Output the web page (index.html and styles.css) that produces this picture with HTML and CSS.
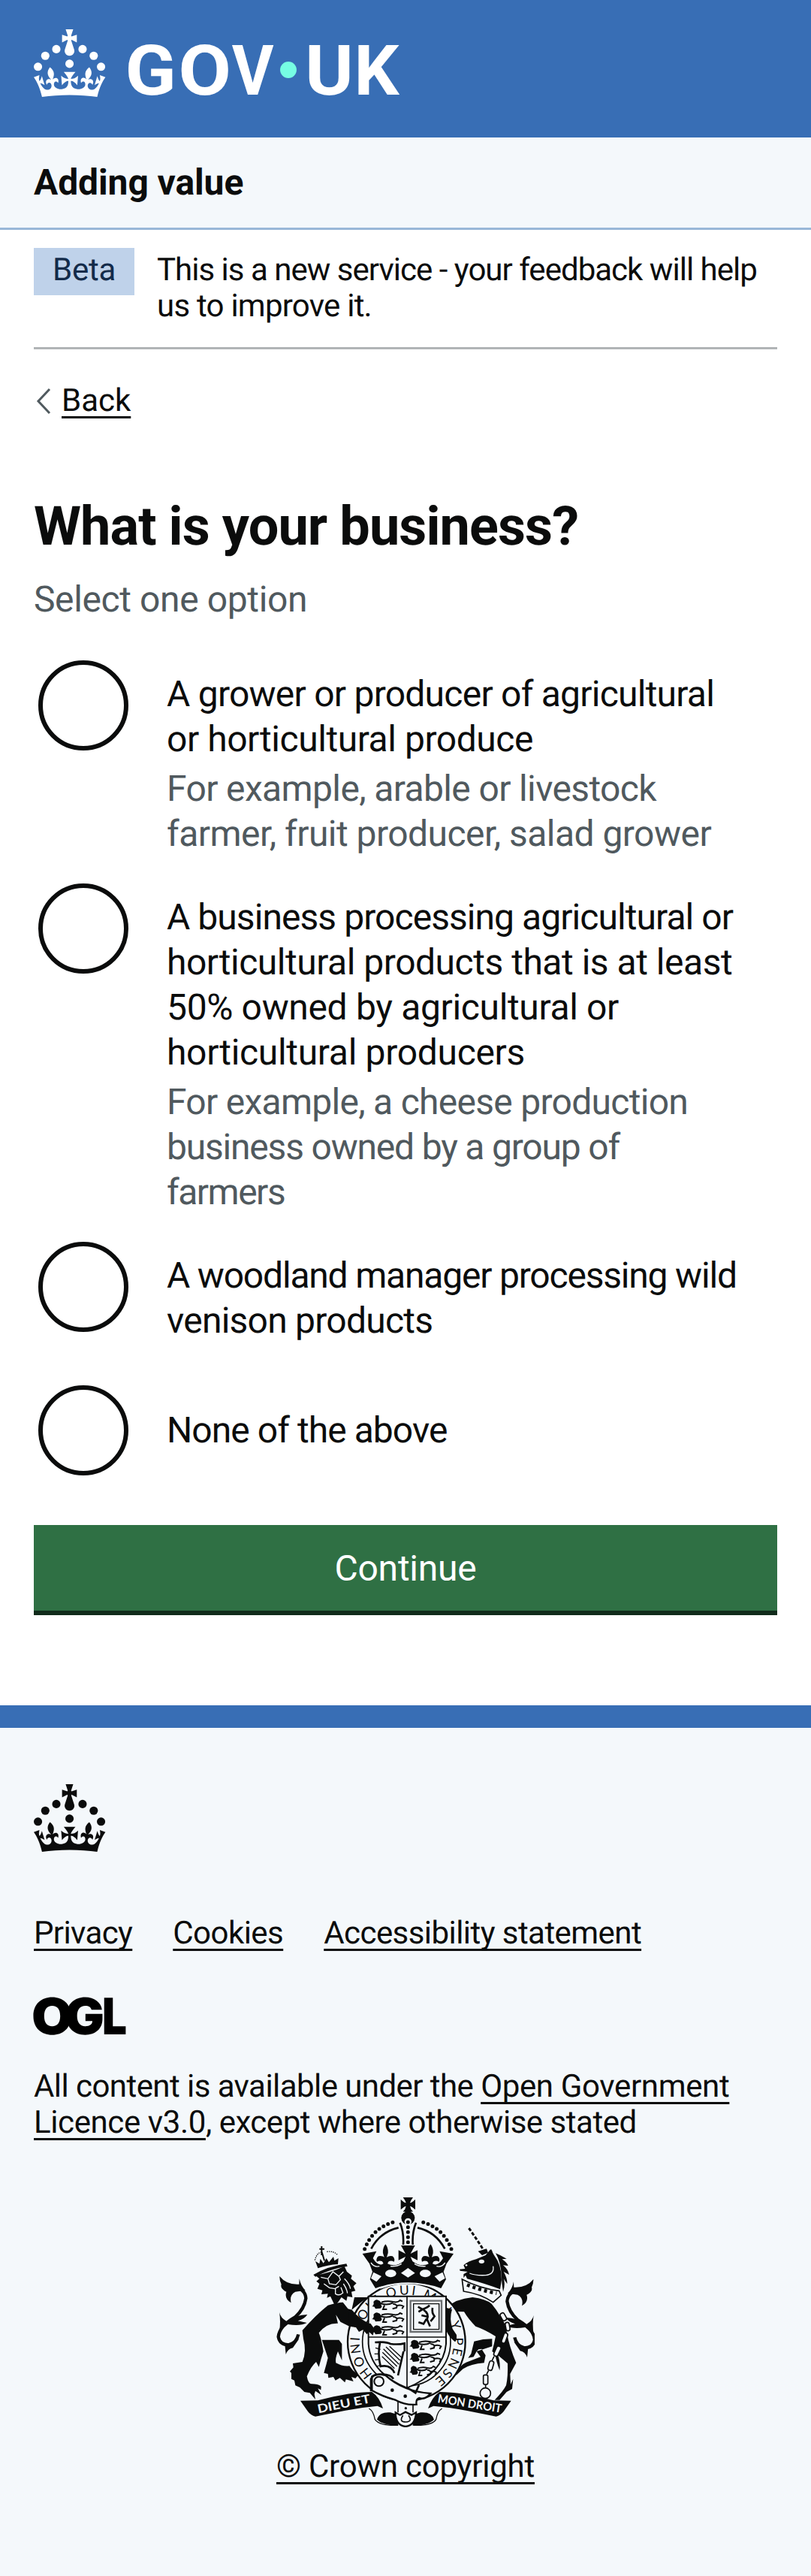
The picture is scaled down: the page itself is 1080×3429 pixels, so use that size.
FILE: index.html
```html
<!DOCTYPE html>
<html lang="en">
<head>
<meta charset="utf-8">
<title>What is your business? - Adding value</title>
<link rel="stylesheet" href="styles.css">
</head>
<body>
<svg class="defs" width="0" height="0" aria-hidden="true">
  <symbol id="crown" viewBox="0 0 64 60">
    <circle cx="20" cy="17.6" r="3.7"/><circle cx="10.2" cy="23.5" r="3.7"/><circle cx="3.7" cy="33.2" r="3.7"/>
    <circle cx="31.7" cy="30.6" r="3.7"/><circle cx="43.3" cy="17.6" r="3.7"/><circle cx="53.2" cy="23.5" r="3.7"/><circle cx="59.7" cy="33.2" r="3.7"/>
    <path d="M33.1,9.8c.2-.1.3-.3.5-.5l4.6,2.4v-6.8l-4.6,1.5c-.1-.2-.3-.3-.5-.5l1.9-5.9h-6.7l1.9,5.9c-.2.1-.3.3-.5.5l-4.6-1.5v6.8l4.6-2.4c.1.2.3.3.5.5l-2.6,8c-.9,2.8,1.2,5.7,4.1,5.7h0c3,0,5.1-2.9,4.1-5.7l-2.6-8ZM37,37.9s-3.4,3.8-4.1,6.1c2.2,0,4.2-.5,6.4-2.8l-.7,8.5c-2-2.8-4.4-4.1-5.7-3.8.1,3.1.5,6.7,5.8,7.2,3.7.3,6.7-1.5,7-3.8.4-2.6-2-4.3-3.7-1.6-1.4-4.5,2.4-6.1,4.9-3.2-1.9-4.5-1.8-7.7,2.4-10.9,3,4,2.6,7.3-1.2,11.1,2.4-1.3,6.2,0,4,4.6-1.2-2.8-3.7-2.2-4.2.2-.3,1.7.7,3.7,3,4.2,1.9.3,4.7-.9,7-5.9-1.3,0-2.4.7-3.9,1.7l2.4-8c.6,2.3,1.4,3.7,2.2,4.5.6-1.6.5-2.8,0-5.3l5,1.8c-2.6,3.6-5.2,8.7-7.3,17.5-7.4-1.1-15.7-1.7-24.5-1.7h0c-8.8,0-17.1.6-24.5,1.7-2.1-8.9-4.7-13.9-7.3-17.5l5-1.8c-.5,2.5-.6,3.7,0,5.3.8-.8,1.6-2.3,2.2-4.5l2.4,8c-1.5-1-2.6-1.7-3.9-1.7,2.3,5,5.2,6.2,7,5.9,2.3-.4,3.3-2.4,3-4.2-.5-2.4-3-3.1-4.2-.2-2.2-4.6,1.6-6,4-4.6-3.7-3.7-4.2-7.1-1.2-11.1,4.2,3.2,4.3,6.4,2.4,10.9,2.5-2.8,6.3-1.3,4.9,3.2-1.8-2.7-4.1-1-3.7,1.6.3,2.3,3.3,4.1,7,3.8,5.4-.5,5.7-4.2,5.8-7.2-1.3-.2-3.7,1-5.7,3.8l-.7-8.5c2.2,2.3,4.2,2.7,6.4,2.8-.7-2.3-4.1-6.1-4.1-6.1h10.6Z"/>
  </symbol>
</svg>

<header class="header">
  <svg class="header-logo" viewBox="0 0 330 60" role="img" aria-label="GOV.UK">
    <use href="#crown" width="64" height="60"/>
    <text class="wordmark" y="58"><tspan x="81" textLength="45.5" lengthAdjust="spacingAndGlyphs">G</tspan><tspan x="128.3" textLength="47" lengthAdjust="spacingAndGlyphs">O</tspan><tspan x="175.8" textLength="37.2" lengthAdjust="spacingAndGlyphs">V</tspan></text>
    <text class="wordmark" y="58"><tspan x="240.8" textLength="43" lengthAdjust="spacingAndGlyphs">U</tspan><tspan x="284.4" textLength="40" lengthAdjust="spacingAndGlyphs">K</tspan></text>
    <circle class="logo-dot" cx="226" cy="36" r="7.3"/>
  </svg>
</header>
<div class="service"><span class="service-name">Adding value</span></div>

<div class="container">
  <div class="phase">
    <strong class="tag">Beta</strong>
    <p class="phase-text"><span class="line t98">This is a new service - your feedback will help</span> <span class="line t76">us to improve it.</span></p>
  </div>
  <a class="back" href="#"><svg class="back-arrow" viewBox="0 0 24 36"><path d="M21 2 6 18 21 34"/></svg><span class="link">Back</span></a>

  <main>
    <h1 class="title">What is your business?</h1>
    <p class="hint lead t40">Select one option</p>
    <div class="radios">
      <label class="radio"><i class="radio-ring"></i>
        <span class="radio-text"><span class="line t76">A grower or producer of agricultural</span> <span class="line t45">or horticultural produce</span>
          <span class="hint"><span class="line t63">For example, arable or livestock</span> <span class="line t54">farmer, fruit producer, salad grower</span></span></span></label>
      <label class="radio"><i class="radio-ring"></i>
        <span class="radio-text"><span class="line t94">A business processing agricultural or</span> <span class="line t48">horticultural products that is at least</span> <span class="line t35">50% owned by agricultural or</span> <span class="line t32">horticultural producers</span>
          <span class="hint"><span class="line t72">For example, a cheese production</span> <span class="line t120">business owned by a group of</span> <span class="line t152">farmers</span></span></span></label>
      <label class="radio plain"><i class="radio-ring"></i>
        <span class="radio-text"><span class="line t120">A woodland manager processing wild</span> <span class="line t76">venison products</span></span></label>
      <label class="radio single"><i class="radio-ring"></i>
        <span class="radio-text"><span class="line t94">None of the above</span></span></label>
    </div>
    <button class="button" type="button">Continue</button>
  </main>
</div>

<footer class="footer">
  <svg class="footer-crown" viewBox="0 0 64 60"><use href="#crown" width="64" height="60"/></svg>
  <nav class="footer-links"><a class="link t63" href="#">Privacy</a><a class="link t54" href="#">Cookies</a><a class="link t56" href="#">Accessibility statement</a></nav>
  <svg class="ogl" viewBox="0 0 124 51" role="img" aria-label="Open Government Licence">
    <text y="50" font-size="67"><tspan x="-3" textLength="55" lengthAdjust="spacingAndGlyphs">O</tspan><tspan x="41" textLength="53" lengthAdjust="spacingAndGlyphs">G</tspan><tspan x="91" textLength="33" lengthAdjust="spacingAndGlyphs">L</tspan></text>
  </svg>
  <p class="licence"><span class="line"><span class="t56">All content is available under the </span><a class="link t35" href="#">Open Government</a></span> <span class="line"><a class="link t40" href="#">Licence v3.0</a><span class="t48">, except where otherwise stated</span></span></p>
  <div class="copyright">
    <svg class="crest" viewBox="84 75 1032 918" aria-hidden="true">
      <defs>
        <path id="garter" d="M469 782A188 188 0 1 1 698 815"/>
        <path id="motto-l" d="M252 937Q360 914 475 892"/>
        <path id="motto-r" d="M727 894Q850 914 990 936"/>
        <g id="tail">
          <path class="s12" d="M150 430Q200 440 202 478Q196 520 160 552Q95 590 92 632Q98 665 135 664Q165 655 172 622"/>
          <path d="M97 390Q125 425 175 422L176 400Q182 430 200 446L160 452Q135 465 143 496Q115 480 124 452Q98 440 104 422Q96 405 97 390ZM96 534Q102 570 96 610L130 582Q180 590 206 576L170 568Q195 562 208 543Q160 545 125 570Q100 555 96 534ZM118 664L122 702Q130 680 150 676L175 640Z"/>
        </g>
        <g id="passant">
          <path d="M6 10Q14 -2 26 4Q38 8 36 22Q44 30 34 36L14 38L10 30L0 28Q10 22 6 10Z"/>
          <path class="s6" d="M34 16Q60 26 84 14M38 12Q60 4 84 10Q104 14 112 4L122 8M50 24L44 40H60M84 18Q104 20 98 34L82 38M98 26Q114 20 126 28L120 38"/>
        </g>
        <g id="fleur">
          <path d="M520 262Q508 278 510 298L515 314Q504 306 492 310Q480 318 486 332Q496 326 506 330Q514 336 512 352H528Q526 336 534 330Q544 326 554 332Q560 318 548 310Q536 306 525 314L530 298Q532 278 520 262Z"/>
        </g>
      </defs>
      <!-- tails -->
      <use href="#tail"/><use href="#tail" transform="matrix(-1 0 0 1 1208 12)"/>
      <!-- lion -->
      <path d="M385 524L396 474H450L420 496ZM290 506Q330 494 350 494L396 552Q430 572 458 576Q470 592 468 626L452 610L446 622L430 604L414 612L402 594L376 590L340 572L322 544L330 578Q284 576 254 616Q264 640 272 690Q262 720 254 752L243 732Q222 750 206 790Q212 822 226 820Q250 820 263 830L262 844L250 838L264 864L240 848L236 860L240 882L218 856L196 852L178 834L160 826L156 806L144 800V776L138 770L152 754L150 738L188 732Q206 690 192 640L188 606Q240 546 290 506Z"/>
      <path d="M266 644H334L346 660V726L334 700L330 690Q318 720 322 736Q350 752 376 748L390 766L412 784L400 798L384 792L392 810L362 802L358 814L338 796L320 806L312 792L292 796L290 780L274 776L284 740L290 716Z"/>
      <path d="M240 386Q300 376 356 350L366 372L386 388L382 400L404 418L392 430L400 448L384 452L388 474L368 470L364 488L344 474L332 492L318 508L300 470L286 476L290 460L264 462L268 446L248 440L256 420L244 410L256 400Z"/>
      <path class="w4" d="M262 394L290 400L310 372L334 390L352 372M290 400L296 420L322 424L340 404L334 390M274 420L296 436L318 440L334 430M320 440V460Q336 470 350 456L342 434M356 400Q376 420 380 440M352 420Q366 440 368 458"/>
      <path d="M232 384Q290 350 364 340L368 350Q300 360 240 392ZM250 358L240 330L256 340L260 320L272 338L284 318L294 334L312 312L316 328L332 318L330 342Q290 344 250 358Z"/>
      <path class="s4 dot4" d="M238 326Q246 296 264 294M286 292Q314 288 330 306"/>
      <path class="s6" d="M265 270V306M256 281H276M266 294L276 328"/>
      <!-- unicorn -->
      <path d="M832 346Q850 330 882 322L920 306L940 282L954 306Q984 344 984 404L978 442Q920 420 846 400L840 386L832 396V382L848 372L818 368L816 362L838 360Z"/>
      <path class="w4" d="M950 350Q956 382 920 386Q880 388 856 378"/><ellipse class="paper" cx="904" cy="331" rx="11" ry="8"/><circle class="paper" cx="843" cy="346" r="4"/>
      <path d="M960 298Q980 306 1004 320L986 322Q1006 336 1010 348L990 346Q1010 362 1014 384L992 372Q1008 400 1006 420L992 400Q1000 420 990 452Q984 420 984 392Q980 330 960 298ZM890 290L924 280L930 296L906 306ZM938 300L944 282L954 318Z"/>
      <path class="horn" d="M853 198Q884 240 912 286"/>
      <path class="o5" d="M826 402L832 450Q900 460 950 494L982 466L974 448Q900 440 826 402Z"/>
      <path class="s6 dot16" d="M846 424Q900 446 964 458"/>
      <path d="M764 516Q800 480 868 474Q920 480 944 500Q964 524 976 546Q1000 574 1006 620Q1014 668 1042 736L1018 780L1020 822L1030 800L1026 840L1004 852L976 884L956 884Q990 850 1002 826Q1010 790 1008 738L970 706Q980 740 976 766Q962 730 958 700L946 690Q954 660 960 630Q916 602 880 590Q850 560 834 532L786 530Q776 560 788 600L804 624Q804 650 796 652Q780 630 762 604Q756 560 764 516Z"/>
      <path d="M946 640Q910 640 874 650L862 700L850 716L872 712L884 690L892 682L904 680L920 706L914 736Q860 740 830 760L802 786Q812 746 842 734L900 712L884 690L946 670Z"/>
      <g class="o5"><rect x="982" y="536" width="18" height="32" rx="8" transform="rotate(-30 991 552)"/><rect x="1000" y="574" width="16" height="34" rx="8" transform="rotate(-10 1008 591)"/><rect x="988" y="616" width="16" height="42" rx="8" transform="rotate(20 996 637)"/><rect x="958" y="668" width="18" height="42" rx="8" transform="rotate(25 967 689)"/><rect x="932" y="728" width="18" height="38" rx="8" transform="rotate(15 941 747)"/><rect x="911" y="784" width="18" height="38" rx="6"/><path d="M980 656L972 670M954 710L946 726M932 766L924 782M920 822V836"/><circle cx="919" cy="857" r="21"/></g>
      <!-- garter -->
      <circle class="o7" cx="604" cy="652" r="235"/>
      <circle class="o5" cx="604" cy="652" r="176"/>
      <text class="motto"><textPath href="#garter" textLength="910" lengthAdjust="spacing">HONI SOIT QUI MAL Y PENSE</textPath></text>
      <path d="M370 520L386 524Q420 566 458 578L472 600L468 626L452 610L446 622L430 604L414 612L402 594L376 590Z"/>
      <!-- shield -->
      <path class="o6" d="M452 470H762V660Q752 776 606 836Q460 776 452 660Z"/>
      <path class="s5" d="M606 470V836M452 633H762"/>
      <use href="#passant" transform="translate(466 482)"/><use href="#passant" transform="translate(466 533)"/><use href="#passant" transform="translate(466 584)"/>
      <use href="#passant" transform="translate(616 642)"/><use href="#passant" transform="translate(616 694)"/><use href="#passant" transform="translate(616 746) scale(.85 1)"/>
      <path class="frame" d="M620 488H744V612H620Z"/><path class="s4" d="M632 500H734V602H632Z"/>
      <path class="s8" d="M650 512L668 522L652 532M668 522Q690 514 696 506M672 524Q696 540 686 562L698 590M664 546L690 552M652 574L672 580L684 560M708 516Q704 536 716 550Q708 562 700 570"/>
      <path class="s8" d="M478 654Q520 650 540 660Q570 664 596 658V690M498 656Q488 700 500 750Q540 740 556 776M592 690L570 786"/>
      <path class="s4" d="M512 680L574 742M522 672L578 726M536 670L584 714M508 694L566 750M506 710L556 758M480 676L500 682M476 700L496 700M478 724L498 722M486 750L502 744"/>
      <path d="M764 516L786 522Q774 560 788 600L804 624Q806 646 798 652Q776 636 762 606Z"/>
      <path d="M440 580L460 578L476 600L470 626L454 612L446 622Z"/>
      <!-- belt -->
      <path class="o7" d="M466 790Q490 776 520 786Q590 850 700 858Q680 884 656 876Q640 880 644 902Q600 906 560 884Q500 866 466 846Z"/>
      <path class="s8" d="M462 850V800Q470 780 500 782Q540 780 552 800M606 834L640 856L654 824"/>
      <circle class="o6" cx="494" cy="810" r="19"/><circle cx="547" cy="845" r="7"/><circle cx="599" cy="869" r="7"/><circle cx="601" cy="917" r="5"/>
      <path class="s5" d="M570 890V934M630 904V934"/>
      <!-- motto scroll -->
      <path d="M180 887L250 886Q380 852 466 852Q496 872 510 918L488 908Q420 914 360 926L240 950Q222 946 210 930Z"/>
      <path d="M1022 887L952 886Q822 852 736 852Q706 872 690 918L712 908Q782 914 842 926L962 950Q980 946 992 930Z"/>
      <path class="s4" d="M454 918Q472 928 478 962Q496 988 570 985M746 918Q728 928 722 962Q706 988 632 985"/>
      <path d="M486 962Q496 930 540 934L560 940L572 986Q510 986 486 962ZM714 962Q704 930 660 934L640 940L628 986Q690 986 714 962Z"/>
      <path class="o7" d="M560 934Q560 986 600 990Q640 986 642 934L624 944L600 932L578 944Z"/><path class="s5" d="M590 946Q572 972 602 972Q630 970 612 946"/>
      <text class="scroll"><textPath href="#motto-l" textLength="214" lengthAdjust="spacingAndGlyphs">DIEU ET</textPath></text>
      <text class="scroll"><textPath href="#motto-r" textLength="258" lengthAdjust="spacingAndGlyphs">MON DROIT</textPath></text>
      <!-- crown -->
      <path class="paper" d="M428 300L500 440Q610 400 720 440L792 300L700 180H520Z"/>
      <path d="M428 300L484 290L470 318Q490 352 512 340H528Q560 356 592 330L600 312L572 326V286L600 300L582 267H638L620 300L648 286V326L620 312L628 330Q660 356 694 340H708Q730 352 750 318L736 290L792 300L764 340L752 372L762 402L742 438Q610 392 480 438L458 402L468 372L456 340Z"/>
      <path class="w4" d="M462 336Q476 356 496 350M540 350Q566 352 584 340M680 350Q654 352 636 340M758 336Q744 356 724 350"/>
      <use href="#fleur"/><use href="#fleur" x="180"/>
      <ellipse class="paper" cx="541" cy="379" rx="22" ry="15"/><ellipse class="paper" cx="679" cy="379" rx="22" ry="15"/><path class="paper" d="M582 377L610 357L638 377L610 395ZM472 374L504 390L484 412L462 398ZM748 374L716 390L736 412L758 398Z"/>
      <path class="beads" d="M437 281Q470 194 560 172M783 281Q750 194 660 172"/>
      <path class="s8" d="M463 280Q500 212 572 196M757 280Q720 212 648 196M578 176Q594 215 591 264M642 176Q626 215 629 264"/>
      <circle cx="610" cy="157" r="27"/><circle class="paper" cx="610" cy="172" r="14"/><path class="beads" d="M610 174V256"/>
      <path d="M590 75H630Q620 88 618 97Q627 95 639 83V124Q627 112 618 110Q620 122 630 132H590Q600 122 602 110Q593 112 581 124V83Q593 95 602 97Q600 88 590 75Z"/>
    </svg>
    <a class="link t20" href="#">© Crown copyright</a>
  </div>
</footer>
</body>
</html>
```
FILE: styles.css
```css
* { box-sizing: border-box; }
body { margin: 0; background: #fff; color: #0b0c0c; font: 400 48px/60px Roboto, "Liberation Sans", sans-serif; text-rendering: geometricPrecision; }
p, h1 { margin: 0; }
.defs { display: none; }
.line { display: block; white-space: pre; }
.link { color: #0b0c0c; text-decoration: underline; text-decoration-thickness: 3px; text-underline-offset: 7px; text-decoration-skip-ink: none; }

/* Tracking steps, in hundredths of a pixel */
.t20 { letter-spacing: -.22px; }
.t32 { letter-spacing: -.32px; }
.t35 { letter-spacing: -.35px; }
.t40 { letter-spacing: -.39px; }
.t45 { letter-spacing: -.45px; }
.t48 { letter-spacing: -.48px; }
.t54 { letter-spacing: -.54px; }
.t56 { letter-spacing: -.56px; }
.t63 { letter-spacing: -.63px; }
.t72 { letter-spacing: -.72px; }
.t76 { letter-spacing: -.76px; }
.t94 { letter-spacing: -.94px; }
.t98 { letter-spacing: -.98px; }
.t120 { letter-spacing: -1.2px; }
.t152 { letter-spacing: -1.5px; }

.header { height: 183px; padding: 39px 45px 0; background: #386eb5; }
.header-logo { display: block; width: 495px; height: 90px; fill: #fff; overflow: visible; }
.wordmark { font: 700 62px Roboto, sans-serif; }
.logo-dot { fill: #76fde3; }
.service { padding: 30px 45px; background: #f4f8fb; border-bottom: 3px solid #99b7d8; }
.service-name { display: block; font-weight: 700; letter-spacing: -.1px; }

.container { padding: 24px 45px 0; }
.phase { display: flex; align-items: flex-start; gap: 30px; padding-bottom: 30px; border-bottom: 3px solid #b1b4b6; font-size: 42px; line-height: 48px; }
.tag { width: 134px; padding: 6px 0 9px; background: #bfd2ea; color: #132b4a; font-weight: 400; text-align: center; letter-spacing: -.26px; }
.phase-text { padding-top: 6px; }
.back { display: flex; align-items: center; margin-top: 45px; font-size: 42px; line-height: 48px; text-decoration: none; }
.back-arrow { width: 24px; height: 36px; margin-right: 13px; fill: none; stroke: #505a5f; stroke-width: 3; }
.title { margin-top: 105px; font-size: 72px; line-height: 75px; letter-spacing: -.9px; }
.hint { color: #50595e; }
.lead { margin-top: 30px; }

.radios { display: flex; flex-direction: column; gap: 30px; margin-top: 48px; }
.radio { display: grid; grid-template-columns: 120px 1fr; column-gap: 51px; padding: 3px 0 3px 6px; }
.radio-ring { width: 120px; height: 120px; border: 6px solid #0b0c0c; border-radius: 50%; }
.radio-text { padding-top: 15px; }
.radio-text .hint { display: block; margin-top: 6px; }
.plain { min-height: 161px; }
.single .radio-text { padding-top: 30px; }
.button { display: block; width: 100%; margin-top: 63px; padding: 28px 0 26px; border: 0; box-shadow: 0 6px 0 #112b1b; background: #2f7044; color: #fff; font: inherit; letter-spacing: -.24px; }

.footer { margin-top: 126px; padding: 75px 45px 121px; border-top: 30px solid #386eb5; background: #f4f8fb; font-size: 42px; line-height: 48px; }
.footer-crown { display: block; width: 96px; height: 90px; fill: #0b0c0c; }
.footer-links { display: flex; gap: 54px; margin-top: 85px; }
.ogl { display: block; width: 124px; height: 51px; margin-top: 60px; overflow: visible; font-family: Inter, sans-serif; font-weight: 900; }
.licence { margin-top: 45px; }
.copyright { display: flex; flex-direction: column; align-items: center; gap: 29px; margin-top: 75px; }

.crest { width: 344px; height: 306px; fill: #0b0c0c; }
.s4, .s5, .s6, .s8, .s12, .w4, .horn, .beads, .frame { fill: none; stroke: #0b0c0c; }
.s4, .w4 { stroke-width: 4; }
.s5, .o5 { stroke-width: 5; }
.s6, .o6 { stroke-width: 6; }
.o7 { stroke-width: 7; }
.s8 { stroke-width: 8; }
.s12 { stroke-width: 13; }
.w4 { stroke: #f4f8fb; }
.o5, .o6, .o7 { fill: #f4f8fb; stroke: #0b0c0c; }
.o5 path { fill: none; }
.paper { fill: #f4f8fb; }
.frame { stroke: #6b6e70; stroke-width: 7; }
.horn { stroke-width: 9; stroke-dasharray: 14 7; }
.beads { stroke-width: 15; stroke-linecap: round; stroke-dasharray: 0 20; }
.dot4 { stroke-dasharray: 4 4; }
.dot16 { stroke-width: 14; stroke-dasharray: 12 12; }
.motto { font: 400 52px Lato, sans-serif; }
.scroll { font: 700 47px Lato, sans-serif; fill: #f4f8fb; }
```
